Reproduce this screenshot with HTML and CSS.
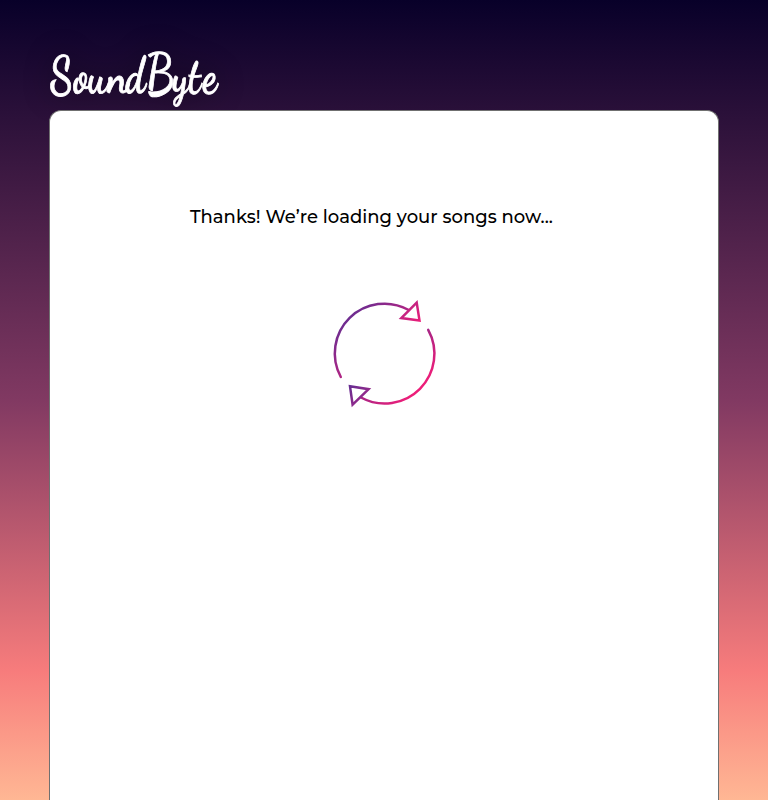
FILE: index.html
```html
<!DOCTYPE html>
<html lang="en">
<head>
<meta charset="utf-8">
<title>SoundByte</title>
<link rel="stylesheet" href="styles.css">
</head>
<body>
<div class="page">
  <header class="header">
    <svg class="logo" width="190" height="60" viewBox="0 0 190 60" role="img" aria-label="SoundByte">
      <text y="46.5" transform="translate(-3 0) skewX(5) scale(.78 1)"><tspan class="cap" x="1">S</tspan><tspan class="low" x="31 50 75">oun</tspan><tspan class="low-d" x="98">d</tspan><tspan class="cap-b" x="124">B</tspan><tspan class="low-y" x="158 179 197">yte</tspan></text>
    </svg>
  </header>
  <main class="card">
    <p class="message">Thanks! We’re loading your songs now...</p>
    <svg class="loader" width="120" height="120" viewBox="324 294 120 120" aria-hidden="true">
      <defs>
        <linearGradient id="upper" gradientUnits="userSpaceOnUse" x1="345" y1="315" x2="398" y2="368"><stop class="purple" offset="0"/><stop class="pink" offset="1"/></linearGradient>
        <linearGradient id="lower" gradientUnits="userSpaceOnUse" x1="371" y1="339" x2="420" y2="388"><stop class="purple" offset="0"/><stop class="pink" offset="1"/></linearGradient>
        <linearGradient id="tip" gradientUnits="userSpaceOnUse" x1="400" y1="301" x2="421" y2="322"><stop class="magenta" offset="0"/><stop class="pink" offset="1"/></linearGradient>
        <linearGradient id="tail" gradientUnits="userSpaceOnUse" x1="349" y1="386" x2="370" y2="405"><stop class="purple" offset="0"/><stop class="magenta" offset="1"/></linearGradient>
      </defs>
      <g class="strokes">
        <path stroke="url(#upper)" d="M340.8 377A49.7 49.7 0 0 1 408.8 310"/>
        <path stroke="url(#lower)" d="M428.2 329.8A49.7 49.7 0 0 1 361 397.5"/>
        <path class="arrow" stroke="url(#tip)" d="M416.7 302.6L419.5 320.6L401.3 318Z"/>
        <path class="arrow" stroke="url(#tail)" d="M350 386.3L368.6 389.2L352.6 404.7Z"/>
      </g>
    </svg>
  </main>
</div>
</body>
</html>
```
FILE: styles.css
```css
* { box-sizing: border-box; }
body { margin: 0; }
.page {
  height: 800px;
  padding: 45px 49px 0;
  overflow: hidden;
  display: flex;
  flex-direction: column;
  background: linear-gradient(#080029 0, #813962 400px, #f77c7c 671px, #ffb794 800px);
}
.header { height: 65px; flex: none; }
.logo {
  display: block;
  overflow: visible;
  fill: #fff;
  stroke: #fff;
  stroke-width: .9;
  font-family: "Dancing Script", "Liberation Serif", serif;
  font-weight: 700;
  filter: drop-shadow(0 0 14px rgba(0, 0, 0, .45));
}
.cap { font-size: 52px; }
.cap-b { font-size: 56px; }
.low { font-size: 55px; }
.low-d { font-size: 51px; }
.low-y { font-size: 52px; }
.card {
  position: relative;
  flex: 1;
  background: #fff;
  border: 1px solid #707070;
  border-bottom: 0;
  border-radius: 12px 12px 0 0;
  display: flex;
  flex-direction: column;
}
.message {
  margin: 94px 0 0 140px;
  color: #000;
  font: 500 18px/24px Montserrat, Inter, sans-serif;
  letter-spacing: .01px;
  white-space: nowrap;
}
.loader { margin: 65px 0 0 274px; }
.strokes { fill: none; stroke-width: 2.5; stroke-linecap: round; }
.arrow { fill: #fff; stroke-linecap: butt; }
.purple { stop-color: #662d91; }
.magenta { stop-color: #aa2888; }
.pink { stop-color: #ed1e79; }
```
